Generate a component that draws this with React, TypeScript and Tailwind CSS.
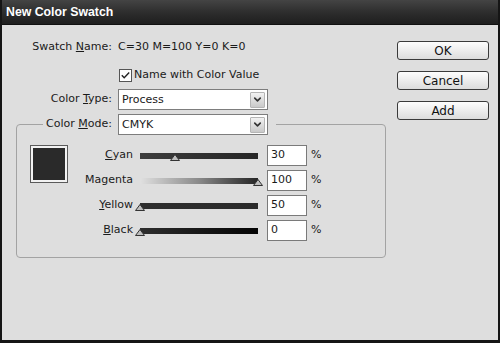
import { ChevronDown } from "lucide-react";

const FONT = "font-['DejaVu_Sans',sans-serif]";

const SLIDERS = [
  { key: "cyan", pre: "", mn: "C", rest: "yan", value: "30", pct: 30, track: "bg-gradient-to-r from-[#3c3c3c] to-[#262626]" },
  { key: "magenta", pre: "Magenta", mn: "", rest: "", value: "100", pct: 100, track: "bg-gradient-to-r from-[#e0e0e0] via-[#8a8a8a] to-[#262626]" },
  { key: "yellow", pre: "", mn: "Y", rest: "ellow", value: "50", pct: 0, track: "bg-gradient-to-r from-[#2e2e2e] to-[#2a2a2a]" },
  { key: "black", pre: "", mn: "B", rest: "lack", value: "0", pct: 0, track: "bg-gradient-to-r from-[#2e2e2e] to-[#050505]" },
];

function Thumb({ pct }: { pct: number }) {
  return (
    <svg
      width="10"
      height="7"
      viewBox="0 0 10 7"
      className="absolute top-[1px]"
      style={{ left: `calc(${pct}% - 5px)` }}
    >
      <path d="M5 0.5 L9.5 6.5 L0.5 6.5 Z" fill="#bdbdbd" stroke="#333" strokeWidth="1" />
    </svg>
  );
}

function Select({ value }: { value: string }) {
  return (
    <div className="flex h-[21px] w-[150px] items-center border border-[#7d7d7d] bg-white pl-[3px] pr-[2px]">
      <span className="flex-1 leading-none">{value}</span>
      <div className="flex h-[16px] w-[15px] items-center justify-center rounded-[1px] border border-[#b5b5b5] bg-gradient-to-b from-[#f2f2f2] to-[#c9c9c9]">
        <ChevronDown className="h-[11px] w-[11px] text-[#333]" strokeWidth={3.5} />
      </div>
    </div>
  );
}

function Button({ label }: { label: string }) {
  return (
    <button className="flex h-[19px] w-[92px] items-center justify-center rounded-[3px] border border-[#3a3a3a] bg-gradient-to-b from-[#fdfdfd] to-[#dcdcdc] text-[12px] leading-none text-[#111]">
      {label}
    </button>
  );
}

export default function App() {
  return (
    <div className={`flex h-[343px] w-[500px] flex-col border-x-2 border-b-[3px] border-[#151515] bg-[#dedede] text-[11px] text-[#1a1a1a] ${FONT}`}>
      {/* Title bar */}
      <div className="flex h-[25px] shrink-0 items-center border-b border-[#111] bg-gradient-to-b from-[#444] via-[#2e2e2e] to-[#1e1e1e] pl-[4px]">
        <span className="font-['Liberation_Sans',sans-serif] text-[12.3px] font-bold text-white">New Color Swatch</span>
      </div>

      <div className="flex flex-1">
        {/* Left side */}
        <div className="flex w-[395px] flex-col pt-[15px]">
          <div className="flex h-[14px] items-center">
            <span className="w-[110px] text-right">
              Swatch <span className="underline">N</span>ame:
            </span>
            <span className="ml-[6px]">C=30 M=100 Y=0 K=0</span>
          </div>

          <div className="mt-[14px] flex h-[14px] items-center pl-[117px]">
            <svg width="13" height="13" viewBox="0 0 13 13">
              <rect x="0.5" y="0.5" width="12" height="12" fill="#fff" stroke="#555" />
              <path d="M2.8 6.3 L5.2 8.8 L10.2 3.6" fill="none" stroke="#222" strokeWidth="1.4" />
            </svg>
            <span className="ml-[2px]">Name with Color Value</span>
          </div>

          <div className="mt-[7px] flex items-center">
            <span className="w-[110px] text-right">
              Color <span className="underline">T</span>ype:
            </span>
            <div className="ml-[6px]">
              <Select value="Process" />
            </div>
          </div>

          <fieldset className="ml-[14px] mt-[4px] w-[370px] rounded-[4px] border border-[#a3a3a3] px-0 pb-[16px] pt-[10px]">
            <legend className="ml-[26px] flex items-center pl-[3px] pr-[8px]">
              <span className="w-[66px] text-right">
                Color <span className="underline">M</span>ode:
              </span>
              <div className="ml-[6px]">
                <Select value="CMYK" />
              </div>
            </legend>

            <div className="flex pl-[13px]">
              <div className="h-[38px] w-[38px] border border-[#5a5a5a] bg-[#f2f2f2] p-[2px]">
                <div className="h-full w-full bg-[#2a2a2a]" />
              </div>

              <div className="flex flex-col gap-[4px]">
                {SLIDERS.map((s) => (
                  <div key={s.key} className="flex h-[21px] items-center">
                    <span className="w-[65px] text-right">
                      {s.pre}
                      {s.mn && <span className="underline">{s.mn}</span>}
                      {s.rest}
                    </span>
                    <div className={`relative ml-[7px] h-[6px] w-[118px] ${s.track}`}>
                      <Thumb pct={s.pct} />
                    </div>
                    <div className="ml-[9px] flex h-[21px] w-[40px] items-center border border-[#7a7a7a] bg-white pl-[3px]">
                      {s.value}
                    </div>
                    <span className="ml-[4px]">%</span>
                  </div>
                ))}
              </div>
            </div>
          </fieldset>
        </div>

        {/* Buttons */}
        <div className="flex flex-col gap-[11px] pt-[16px]">
          <Button label="OK" />
          <Button label="Cancel" />
          <Button label="Add" />
        </div>
      </div>
    </div>
  );
}
